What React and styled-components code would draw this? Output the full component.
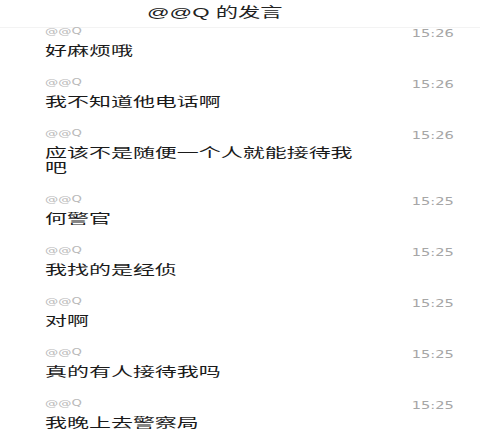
import React from "react";
import styled, { createGlobalStyle, css } from "styled-components";

const Global = createGlobalStyle`
  html, body { margin: 0; padding: 0; background: #ffffff; }
  body { width: 500px; height: 440px; overflow: hidden; }
`;

const stretched = (k, origin = "left") => css`
  transform: scaleX(${k});
  transform-origin: ${origin} center;
`;

const Page = styled.div`
  width: 500px;
  height: 440px;
  overflow: hidden;
  background: #ffffff;
  font-family: "Liberation Sans", "Noto Sans CJK SC", sans-serif;
`;

const Header = styled.div`
  box-sizing: border-box;
  width: 480px;
  height: 28px;
  padding-left: 147px;
  border-bottom: 1px solid #f3f3f3;
`;

const Title = styled.h1`
  ${stretched(1.65)}
  width: max-content;
  margin: 0;
  font-family: "Liberation Sans", "Noto Sans CJK SC", sans-serif;
  font-size: 13.5px;
  line-height: 25px;
  font-weight: 400;
  color: #222222;
  white-space: nowrap;
`;

const List = styled.div`
  display: flex;
  flex-direction: column;
  gap: 22px;
`;

const Row = styled.div`
  display: flex;
  flex-direction: column;
  padding: 0 46px 0 45px;
`;

const Meta = styled.div`
  display: flex;
  justify-content: space-between;
  align-items: flex-start;
  height: 8px;
`;

const Name = styled.span`
  ${stretched(1.65)}
  font-family: "DejaVu Sans", sans-serif;
  font-size: 8px;
  line-height: 8px;
  color: #b9b9b9;
`;

const Time = styled.span`
  ${stretched(1.46, "right")}
  margin-top: 2px;
  font-family: "DejaVu Sans", sans-serif;
  font-size: 10px;
  line-height: 8px;
  color: #a6a6a6;
`;

const Message = styled.p`
  ${stretched(1.69)}
  margin: 6px 0 0;
  max-width: 188px;
  font-family: "Noto Sans CJK SC", sans-serif;
  font-size: 13px;
  line-height: 15px;
  font-weight: 400;
  color: #1a1a1a;
`;

const messages = [
  { time: "15:26", text: "好麻烦哦" },
  { time: "15:26", text: "我不知道他电话啊" },
  { time: "15:26", text: "应该不是随便一个人就能接待我吧" },
  { time: "15:25", text: "何警官" },
  { time: "15:25", text: "我找的是经侦" },
  { time: "15:25", text: "对啊" },
  { time: "15:25", text: "真的有人接待我吗" },
  { time: "15:25", text: "我晚上去警察局" },
];

export default function App() {
  return (
    <Page>
      <Global />
      <Header>
        <Title>@@Q 的发言</Title>
      </Header>
      <List>
        {messages.map((m, i) => (
          <Row key={i}>
            <Meta>
              <Name>@@Q</Name>
              <Time>{m.time}</Time>
            </Meta>
            <Message>{m.text}</Message>
          </Row>
        ))}
      </List>
    </Page>
  );
}
